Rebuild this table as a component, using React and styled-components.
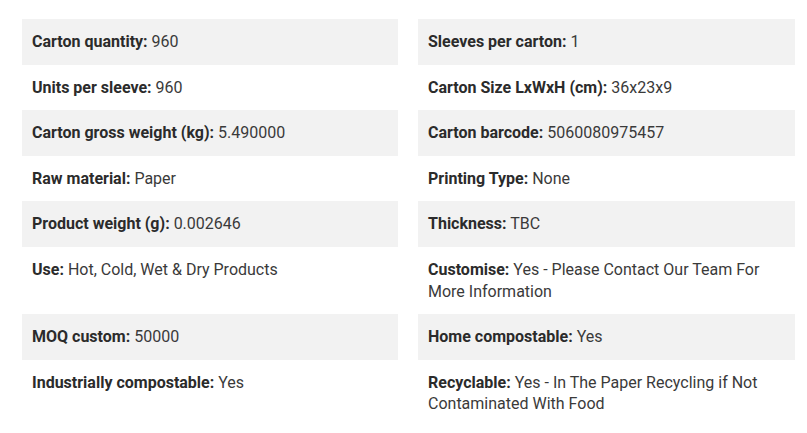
import React from "react";
import styled, { createGlobalStyle } from "styled-components";

const GlobalStyle = createGlobalStyle`
  body {
    margin: 0;
    background: #ffffff;
    font-family: Roboto, "Liberation Sans", sans-serif;
  }
`;

const StyledPage = styled.div`
  padding: 19px 12px 8px 22px;
`;

const StyledGrid = styled.div`
  display: grid;
  grid-template-columns: 376px 377px;
  column-gap: 20px;
`;

const StyledCell = styled.div`
  background: ${(props) => (props.shaded ? "#f2f2f2" : "transparent")};
  padding: 12px 10px;
  font-size: 16px;
  line-height: 21.6px;
  color: #3a3a3a;
`;

const StyledLabel = styled.strong`
  font-weight: 700;
  color: #2b2b2b;
`;

const specs = [
  ["Carton quantity", "960"],
  ["Sleeves per carton", "1"],
  ["Units per sleeve", "960"],
  ["Carton Size LxWxH (cm)", "36x23x9"],
  ["Carton gross weight (kg)", "5.490000"],
  ["Carton barcode", "5060080975457"],
  ["Raw material", "Paper"],
  ["Printing Type", "None"],
  ["Product weight (g)", "0.002646"],
  ["Thickness", "TBC"],
  ["Use", "Hot, Cold, Wet & Dry Products"],
  ["Customise", "Yes - Please Contact Our Team For More Information"],
  ["MOQ custom", "50000"],
  ["Home compostable", "Yes"],
  ["Industrially compostable", "Yes"],
  ["Recyclable", "Yes - In The Paper Recycling if Not Contaminated With Food"],
];

const App = () => {
  return (
    <StyledPage>
      <GlobalStyle />
      <StyledGrid>
        {specs.map(([label, value], i) => (
          <StyledCell key={label} shaded={Math.floor(i / 2) % 2 === 0}>
            <StyledLabel>{label}:</StyledLabel> {value}
          </StyledCell>
        ))}
      </StyledGrid>
    </StyledPage>
  );
};

export default App;
